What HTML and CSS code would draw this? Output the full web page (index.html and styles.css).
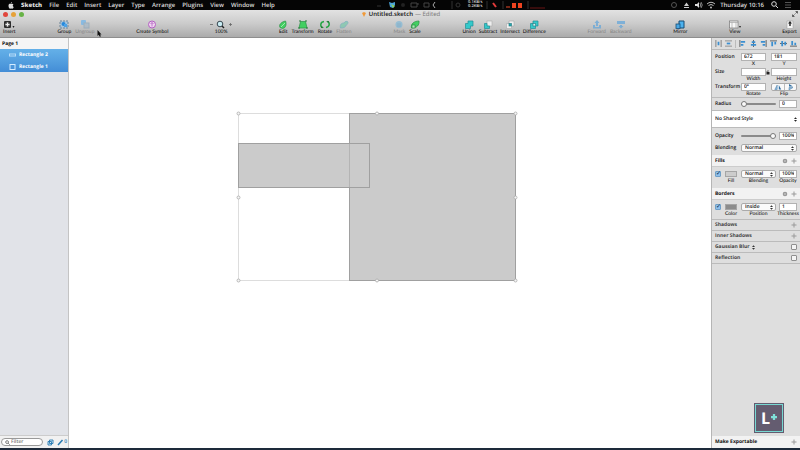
FILE: index.html
```html
<!DOCTYPE html>
<html lang="en">
<head>
<meta charset="utf-8">
<title>Untitled.sketch</title>
<link rel="stylesheet" href="styles.css">
</head>
<body>
<nav class="menubar">
  <div class="menus">
    <svg class="apple" viewBox="0 0 12 14"><path d="M8 0C6 .5 5.500 2 5.700 3 7 3 8 1.500 8 0zM6 4C4 3 1 3.500 1 7.500 1 11 3 14 4.500 13.500 6 13 6.500 13 8 13.500 9.500 14 11 11.500 11.500 10 9 9 9 6 11 5 9.500 3 7.500 3.500 6 4z" fill="#ddd"/></svg>
    <b>Sketch</b><span>File</span><span>Edit</span><span>Insert</span><span>Layer</span><span>Type</span><span>Arrange</span><span>Plugins</span><span>View</span><span>Window</span><span>Help</span>
  </div>
  <div class="monitors">
    <svg class="mon-left" viewBox="0 0 60 10"><path d="M1 6h4" stroke="#333"/><path d="M13 2l3 1 3-1v3l-2 3-3-1z" fill="#4ba3d8"/><path d="M15 4l4 2-2 2z" fill="#8fd05a"/><circle cx="27" cy="5" r="2" fill="#222"/><path d="M35 3h6v4h-6zM41 4h2M48 3h5v4h-5z" fill="none" stroke="#444"/><path d="M59 2l-2 3 2 3" fill="none" stroke="#aaa"/></svg>
    <svg class="mon-dial" viewBox="0 0 12 10"><path d="M2 1v8" stroke="#333"/><circle cx="8" cy="5" r="2" fill="none" stroke="#333"/></svg>
    <span class="net">0.1KB/s<br>0.2KB/s</span>
    <svg class="mon-cpu" viewBox="0 0 66 10"><path d="M3 1v8M19 1v8M44 1v8" stroke="#333"/><path d="M9 3l3 4" stroke="#e23a3a" stroke-width="2"/><path d="M22 7h4" stroke="#e84a2a"/><path d="M28 3h4v5h-4zM34 3h4v5h-4z" fill="#ee4420"/><path d="M46 8h15" stroke="#6a1515"/></svg>
  </div>
  <div class="status">
    <svg class="status-icons" viewBox="0 0 46 10"><circle cx="4" cy="5" r="2.500" fill="none" stroke="#555"/><path d="M14 6l2.500-3.500L19 6zM14 7h5v1h-5z" fill="#ccc"/><path d="M25 4h2l2-2v6l-2-2h-2z" fill="#ddd"/><path d="M30 3q1.500 2 0 4M31 2q2.500 3 0 6" fill="none" stroke="#bbb" stroke-width=".7"/><path d="M37 4q4-3.500 8 0M38.500 5.500q2.500-2 5 0" fill="none" stroke="#bbb"/><circle cx="41" cy="7.500" r="1" fill="#bbb"/></svg>
    <span>Thursday 10:16</span>
    <svg class="status-search" viewBox="0 0 22 10"><circle cx="4" cy="4" r="2.300" fill="none" stroke="#ddd"/><path d="M6 6l2 2" stroke="#ddd"/><path d="M15 2.500h6M15 5h6M15 7.500h6" stroke="#555"/></svg>
  </div>
</nav>

<header class="window-head">
  <div class="titlebar">
    <div class="lights"><button class="light red" aria-label="Close"></button><button class="light amber" aria-label="Minimize"></button><button class="light green" aria-label="Zoom"></button></div>
    <div class="title"><svg class="doc" viewBox="0 0 6 6"><path d="M1 2l2-1 2 1-2 4z" fill="#f09a3a"/></svg><span>Untitled.sketch</span><span class="edited">— Edited</span></div>
    <svg class="full" viewBox="0 0 6 6"><path d="M3.500.5h2v2M5.500.5L3.500 2.500M.5 3.500v2h2M.5 5.500l2-2" fill="none" stroke="#555" stroke-width=".9"/></svg>
  </div>
  <div class="toolbar">
    <div class="group"><button class="tool"><svg viewBox="0 0 12 9"><rect x="1" y="1" width="7" height="7" rx="1" fill="#2c2c2c"/><path d="M3 3h3v3H3z" fill="none" stroke="#bbb" stroke-width=".6"/><path d="M4.500 2.500v4M2.500 4.500h4" stroke="#eee"/><path d="M9.500 6h2l-1 2z" fill="#222"/></svg>Insert</button></div>
    <div class="group">
      <button class="tool"><svg viewBox="0 0 12 9"><rect x="2" y="1" width="8" height="7" fill="#a9c5dc" stroke="#6d8497" stroke-dasharray="2 1"/><circle cx="5.500" cy="4" r="2" fill="#2589dc"/><rect x="6" y="4" width="3" height="3" fill="#4aa2e8"/></svg>Group</button>
      <button class="tool off"><svg viewBox="0 0 12 9"><rect x="2" y="0" width="5" height="5" rx="1" fill="#6cb3eb"/><rect x="5" y="3" width="5" height="5" fill="#a5b8c8" stroke="#8ca5b8"/></svg>Ungroup</button>
    </div>
    <div class="group"><button class="tool"><svg viewBox="0 0 12 9"><circle cx="6" cy="4.500" r="3.500" fill="#efd5f0" stroke="#b35fc2"/><path d="M6 2.500v4M4.500 4L6 2.500 7.500 4" stroke="#b35fc2" fill="none" stroke-width=".8"/></svg>Create Symbol</button></div>
    <div class="group zoom"><button class="tool"><svg class="wide" viewBox="0 0 22 9"><path d="M0 4.500h3M19 4.500h3M20.500 3v3" stroke="#666" stroke-width=".8"/><circle cx="10" cy="4" r="2.800" fill="#c9edf4" stroke="#38464f"/><path d="M12 6l2 2" stroke="#222" stroke-width="1.500"/></svg>100%</button></div>
    <div class="group">
      <button class="tool"><svg viewBox="0 0 12 9"><path d="M3 7.500C1.500 5 4 2 8.500 1c1 2 1 7-3 7.500z" fill="#43cf62" stroke="#2b9246" stroke-width=".7"/><path d="M4 7l4-4" stroke="#d8ffe0" stroke-width=".6"/></svg>Edit</button>
      <button class="tool"><svg viewBox="0 0 12 9"><path d="M3.500 1.500h5l1.500 6.500H2z" fill="#43cf62" stroke="#2b9246" stroke-width=".7"/><path d="M2 1h2M8 1h2M1 8h2M9 8h2" stroke="#277c3b"/></svg>Transform</button>
      <button class="tool"><svg viewBox="0 0 12 9"><path d="M5 1.500C1 2 1 6.500 3.500 7.500M7 7.500c4-.5 4-5 1.500-6" fill="none" stroke="#26a745" stroke-width="1.500"/><path d="M2 6l3 2H2zM10 3L7 1h3z" fill="#277c3b"/></svg>Rotate</button>
      <button class="tool off"><svg viewBox="0 0 12 9"><path d="M2.500 8C1.500 4 4 3 6 3c1-2 3-2 4-1 0 2-1 3-2 3 0 2-2 3-5.500 3z" fill="#77c9a9" stroke="#68a8bd" stroke-width=".8"/></svg>Flatten</button>
    </div>
    <div class="group">
      <button class="tool off"><svg viewBox="0 0 12 9"><circle cx="6" cy="4.500" r="3.500" fill="#80b9d8"/><rect x="4" y="3" width="4" height="4" fill="#78afcf"/></svg>Mask</button>
      <button class="tool"><svg viewBox="0 0 12 9"><path d="M2.500 8C1.500 4 5 1 10 1c.5 4-2 7-7.500 7z" fill="#43cf62" stroke="#2b9246" stroke-width=".7"/><rect x="3" y="5" width="3" height="3" fill="#a7efb6" stroke="#277c3b" stroke-width=".6"/></svg>Scale</button>
    </div>
    <div class="group tight">
      <button class="tool"><svg viewBox="0 0 12 9"><path d="M5 1h5v5H7.500v2.500h-5v-5H5z" fill="#35c9ca" stroke="#218e97" stroke-width=".7"/></svg>Union</button>
      <button class="tool"><svg viewBox="0 0 12 9"><rect x="5" y="1" width="5" height="5" fill="#eee" stroke="#aaa" stroke-width=".6"/><path d="M2.500 3.500H5V6h2.500v2.500h-5z" fill="#35c9ca" stroke="#218e97" stroke-width=".7"/></svg>Subtract</button>
      <button class="tool"><svg viewBox="0 0 12 9"><path d="M5 1h5v5H7.500v2.500h-5v-5H5z" fill="#eee" stroke="#aaa" stroke-width=".6"/><rect x="5" y="3.500" width="2.500" height="2.500" fill="#27a8ac" stroke="#217780" stroke-width=".6"/></svg>Intersect</button>
      <button class="tool"><svg viewBox="0 0 12 9"><path d="M5 1h5v5H7.500v2.500h-5v-5H5z" fill="#35c9ca" stroke="#218e97" stroke-width=".7"/><rect x="5" y="3.500" width="2.500" height="2.500" fill="#d9eeee" stroke="#217780" stroke-width=".6"/></svg>Difference</button>
    </div>
    <div class="group">
      <button class="tool off"><svg viewBox="0 0 12 9"><path d="M6 0L3.500 3H5v3h2V3h1.500zM2 5h2v2h4V5h2v3.500H2z" fill="#5fa5dc"/></svg>Forward</button>
      <button class="tool off"><svg viewBox="0 0 12 9"><path d="M2 1h8v3H2zM5 5h2v1h1.500L6 8.500 3.500 6H5z" fill="#5fa5dc"/></svg>Backward</button>
    </div>
    <div class="group"><button class="tool"><svg viewBox="0 0 12 9"><path d="M5 1h5v7H5z" fill="#4cb2ef" stroke="#174d75"/><rect x="2" y="4" width="4" height="4.500" fill="#49a8e4" stroke="#174d75" stroke-width=".8"/></svg>Mirror</button></div>
    <div class="group"><button class="tool"><svg viewBox="0 0 12 9"><rect x=".5" y="1" width="8.500" height="7" fill="#f8f8f8" stroke="#777" stroke-width=".7"/><path d="M.5 2.500H9M3 2.500V8M7 2.500V8" stroke="#999" stroke-width=".6"/><path d="M10 6h2l-1 2z" fill="#222"/></svg>View</button></div>
    <div class="group"><button class="tool"><svg viewBox="0 0 12 9"><rect x="3" y="1" width="6" height="7.500" fill="#f5f5f5" stroke="#999" stroke-width=".5"/><path d="M6 1L4 3.500h1.300V6h1.400V3.500H8z" fill="#222"/></svg>Export</button></div>
  </div>
  <svg class="cursor" viewBox="0 0 5 7"><path d="M.5 0L4.500 4.500H3l1 2H2.500l-.8-1.700L.5 6z" fill="#111"/></svg>
</header>

<main class="work">
  <aside class="layers">
    <div class="page">Page 1</div>
    <button class="layer"><svg viewBox="0 0 8 8"><rect x="1" y="3" width="6" height="2" fill="none" stroke="#b7dcf8"/></svg>Rectangle 2</button>
    <button class="layer"><svg viewBox="0 0 8 8"><rect x="1.500" y="1.500" width="5" height="5" fill="none" stroke="#d4ecff"/></svg>Rectangle 1</button>
    <div class="filter">
      <label class="search"><svg viewBox="0 0 6 6"><circle cx="2.500" cy="2.500" r="1.700" fill="none" stroke="#444" stroke-width=".8"/><path d="M4 4l1.500 1.500" stroke="#444"/></svg><input type="search" placeholder="Filter" aria-label="Filter"></label>
      <svg class="filter-icon" viewBox="0 0 7 7"><path d="M2.500 1h3.500v3.500H2.500zM1 2.500h3.500V6H1z" fill="#d6e9f6" stroke="#287ab2" stroke-width=".9"/></svg>
      <svg class="filter-icon" viewBox="0 0 7 7"><path d="M1 6L5.500 1" stroke="#287ab2" stroke-width="1.500"/></svg><span>0</span>
    </div>
  </aside>

  <section class="canvas">
    <svg class="art" viewBox="0 0 284 174">
      <path d="M114 3.500H3.500v167H114" fill="none" stroke="#ddd"/>
      <rect x="114.500" y="3.500" width="166" height="167" fill="#cbcbcb" stroke="#a0a0a0"/>
      <rect x="3.500" y="33.500" width="131" height="44" fill="#cbcbcb" stroke="#a0a0a0"/>
      <path d="M114.500 34v43" stroke="#b4b4b4"/>
      <g fill="#f6f6f6" stroke="#aaa" stroke-width=".8"><circle cx="3.500" cy="3.500" r="1.500"/><circle cx="142" cy="3.500" r="1.500"/><circle cx="280.500" cy="3.500" r="1.500"/><circle cx="3.500" cy="87.500" r="1.500"/><circle cx="280.500" cy="87.500" r="1.500"/><circle cx="3.500" cy="170.500" r="1.500"/><circle cx="142" cy="170.500" r="1.500"/><circle cx="280.500" cy="170.500" r="1.500"/></g>
    </svg>
  </section>

  <aside class="inspector">
    <div class="align">
      <svg viewBox="0 0 8 8"><path d="M1 0v8M7 0v8" stroke="#777"/><path d="M4 2v4" stroke="#3b8fd0" stroke-width="2"/></svg>
      <svg viewBox="0 0 8 8"><path d="M0 1h8M0 7h8" stroke="#888"/><path d="M2 4h4" stroke="#3b8fd0" stroke-width="2"/></svg>
      <i></i>
      <svg viewBox="0 0 8 8"><path d="M1 0v8" stroke="#555"/><path d="M2 2h5M2 5.500h3" stroke="#3b8fd0" stroke-width="2"/></svg>
      <svg viewBox="0 0 8 8"><path d="M4 0v8" stroke="#555"/><path d="M2 2.500h4M1 5.500h6" stroke="#3b8fd0" stroke-width="2"/></svg>
      <svg viewBox="0 0 8 8"><path d="M7 0v8" stroke="#555"/><path d="M1 2h5M3 5.500h3" stroke="#3b8fd0" stroke-width="2"/></svg>
      <svg viewBox="0 0 8 8"><path d="M0 1h8" stroke="#555"/><path d="M2.500 2v5M6 2v3" stroke="#3b8fd0" stroke-width="2"/></svg>
      <svg viewBox="0 0 8 8"><path d="M0 4h8" stroke="#555"/><path d="M2.500 1v6M6 2v4" stroke="#3b8fd0" stroke-width="2"/></svg>
      <svg viewBox="0 0 8 8"><path d="M0 7h8" stroke="#555"/><path d="M2.500 1v5M6 3v3" stroke="#3b8fd0" stroke-width="2"/></svg>
    </div>
    <div class="geometry">
      <span class="name">Position</span>
      <div class="cell"><input id="x" value="672"><label for="x">X</label></div>
      <div class="cell"><input id="y" value="181"><label for="y">Y</label></div>
      <span class="name">Size</span>
      <div class="cell"><input id="w"><label for="w">Width</label></div>
      <div class="cell"><svg class="lock" viewBox="0 0 4 5"><path d="M.5 2h3v2.500h-3z" fill="#222"/><path d="M1 2V1h2" fill="none" stroke="#333" stroke-width=".6"/></svg><input id="h"><label for="h">Height</label></div>
      <span class="name">Transform</span>
      <div class="cell"><input id="r" value="0°"><label for="r">Rotate</label></div>
      <div class="cell"><div class="flip"><button aria-label="Flip horizontal"><svg viewBox="0 0 8 6"><path d="M3.200 1v4.500H.8z" fill="#8db9dd" stroke="#467da8" stroke-width=".5"/><path d="M4.800 1v4.500h2.400z" fill="#2e6da0"/></svg></button><button aria-label="Flip vertical"><svg viewBox="0 0 8 6"><path d="M2 0l4 2.500H2z" fill="#2e6da0"/><path d="M2 3.500h4L2 6z" fill="#8db9dd" stroke="#467da8" stroke-width=".5"/></svg></button></div><small>Flip</small></div>
    </div>
    <div class="slide-row ruled"><label for="radius" class="name">Radius</label><input id="radius" type="range" value="0"><input class="num" value="0" aria-label="Radius value"></div>
    <div class="shared"><select aria-label="Shared style"><option>No Shared Style</option></select><svg class="updown" viewBox="0 0 4 6"><path d="M0 2.300L2 0l2 2.300zM0 3.700L2 6l2-2.300z" fill="#222"/></svg></div>
    <div class="appearance">
      <div class="slide-row"><label for="opacity" class="name">Opacity</label><input id="opacity" type="range" value="100"><input class="num" value="100%" aria-label="Opacity value"></div>
      <div class="blend-row"><label for="blend" class="name">Blending</label><div class="pick"><select id="blend"><option>Normal</option></select><svg class="updown" viewBox="0 0 4 6"><path d="M0 2.300L2 0l2 2.300zM0 3.700L2 6l2-2.300z" fill="#333"/></svg></div></div>
    </div>
    <h2>Fills<svg class="gear" viewBox="0 0 6 6"><circle cx="3" cy="3" r="1.700" fill="#bbb" stroke="#999" stroke-width="1.200"/></svg><svg class="plus" viewBox="0 0 6 6"><path d="M3 .5v5M.5 3h5" stroke="#999"/></svg></h2>
    <div class="paint">
      <input type="checkbox" checked aria-label="Fill enabled">
      <div class="cell"><button id="fc" class="swatch"></button><label for="fc">Fill</label></div>
      <div class="cell"><div class="pick"><select id="fb"><option>Normal</option></select><svg class="updown" viewBox="0 0 4 6"><path d="M0 2.300L2 0l2 2.300zM0 3.700L2 6l2-2.300z" fill="#333"/></svg></div><label for="fb">Blending</label></div>
      <div class="cell"><input id="fo" value="100%"><label for="fo">Opacity</label></div>
    </div>
    <h2>Borders<svg class="gear" viewBox="0 0 6 6"><circle cx="3" cy="3" r="1.700" fill="#bbb" stroke="#999" stroke-width="1.200"/></svg><svg class="plus" viewBox="0 0 6 6"><path d="M3 .5v5M.5 3h5" stroke="#999"/></svg></h2>
    <div class="paint">
      <input type="checkbox" checked aria-label="Border enabled">
      <div class="cell"><button id="bc" class="swatch dark"></button><label for="bc">Color</label></div>
      <div class="cell"><div class="pick"><select id="bp"><option>Inside</option></select><svg class="updown" viewBox="0 0 4 6"><path d="M0 2.300L2 0l2 2.300zM0 3.700L2 6l2-2.300z" fill="#333"/></svg></div><label for="bp">Position</label></div>
      <div class="cell"><input id="bt" value="1"><label for="bt">Thickness</label></div>
    </div>
    <div class="effect"><span>Shadows</span><svg class="plus" viewBox="0 0 6 6"><path d="M3 .5v5M.5 3h5" stroke="#999"/></svg></div>
    <div class="effect"><span>Inner Shadows</span><svg class="plus" viewBox="0 0 6 6"><path d="M3 .5v5M.5 3h5" stroke="#999"/></svg></div>
    <div class="effect"><label for="blur">Gaussian Blur</label><svg class="updown" viewBox="0 0 4 6"><path d="M0 2.300L2 0l2 2.300zM0 3.700L2 6l2-2.300z" fill="#333"/></svg><input id="blur" type="checkbox"></div>
    <div class="effect last"><label for="refl">Reflection</label><input id="refl" type="checkbox"></div>
    <div class="badge"><div class="badge-frame">L<svg viewBox="0 0 8 8"><path d="M2.500 0h3v2.500H8v3H5.500V8h-3V5.500H0v-3h2.500z" fill="#7fe0d8"/></svg></div></div>
    <div class="exportable">Make Exportable<svg class="plus" viewBox="0 0 6 6"><path d="M3 .5v5M.5 3h5" stroke="#999"/></svg></div>
  </aside>
</main>
</body>
</html>
```
FILE: styles.css
```css
* { box-sizing: border-box; }
body {
  margin: 0;
  height: 100vh;
  display: flex;
  flex-direction: column;
  overflow: hidden;
  background: #1d2a3a;
  color: #111;
  font: 600 5px/8px "Open Sans", sans-serif;
  text-rendering: geometricPrecision;
}
svg { display: block; flex: none; }
button, input, select {
  font: inherit;
  color: inherit;
  text-rendering: inherit;
  margin: 0;
  padding: 0;
  border: 0;
  background: none;
  appearance: none;
  min-width: 0;
}

/* menu bar */
.menubar {
  height: 10px;
  flex: none;
  display: grid;
  grid-template-columns: 47% 1fr auto;
  align-items: center;
  background: #050505;
  color: #ddd;
  font-size: 6px;
}
.menus { display: flex; align-items: center; gap: 7px; padding-left: 8px; }
.apple { width: 6px; height: 7px; }
.monitors { display: flex; align-items: center; gap: 2px; }
.mon-left { width: 60px; height: 10px; }
.mon-dial { width: 12px; height: 10px; margin-left: 12px; }
.mon-cpu { width: 66px; height: 10px; }
.net { font-size: 4px; line-height: 4px; margin-left: 4px; }
.status { display: flex; align-items: center; gap: 4px; padding-right: 8px; }
.status-icons { width: 46px; height: 10px; }
.status-search { width: 22px; height: 10px; margin-left: 2px; }

/* title and toolbar */
.window-head {
  position: relative;
  flex: none;
  background: linear-gradient(#e2e2e2, #cbcbcb 50%, #ababab);
  border-bottom: 1px solid #8e8e8e;
}
.titlebar { display: grid; grid-template-columns: 1fr auto 1fr; align-items: center; height: 8px; padding: 0 2px 0 3px; }
.lights { display: flex; gap: 3px; }
.light { width: 5px; height: 5px; border-radius: 50%; }
.red { background: #e1473d; }
.amber { background: #e6a23a; }
.green { background: #68b347; }
.title { display: flex; align-items: center; gap: 2px; font-size: 6px; }
.doc { width: 6px; height: 6px; }
.edited { color: #777; font-weight: 400; }
.full { width: 6px; height: 6px; justify-self: end; }
.toolbar { display: flex; justify-content: space-between; padding: 2px 3px; }
.group { display: flex; gap: 4px; }
.tight { gap: 3px; }
.zoom { padding: 0 7px 0 2px; }
.tool { display: flex; flex-direction: column; align-items: center; font: 500 5px/7px Lato, sans-serif; height: 15px; white-space: nowrap; }
.tool svg { width: 12px; height: 9px; margin: 0 -2px; }
.tool .wide { width: 22px; }
.off { color: #888; }
.off svg { opacity: .7; }
.cursor { position: absolute; left: 97px; top: 20px; width: 5px; height: 7px; }

/* layer list */
.work { flex: 1; min-height: 0; display: grid; grid-template-columns: 69px 1fr 89px; margin-bottom: 2px; background: #fff; }
.layers { display: flex; flex-direction: column; background: #e1e3e8; border-right: 1px solid #c4c4c4; }
.page { height: 11px; padding: 2px; background: #f5f5f5; font-weight: 700; }
.layer { display: flex; align-items: center; gap: 2px; height: 11px; padding-left: 8px; background: linear-gradient(#549fdf, #438dd6); color: #fff; font-weight: 700; }
.page + .layer { background: linear-gradient(#64b0e8, #549fdf); height: 12px; }
.layer svg { width: 9px; height: 8px; }
.filter { margin-top: auto; height: 13px; display: flex; align-items: center; gap: 3px; padding: 0 1px; background: #f1f1f1; border-top: 1px solid #ccc; color: #287ab2; }
.search { display: flex; align-items: center; gap: 1px; width: 43px; height: 8px; padding-left: 3px; margin-right: 1px; border: 1px solid #999; border-radius: 4px; background: #fff; }
.search svg { width: 5px; height: 5px; }
.search input { width: 30px; height: 6px; line-height: 6px; }
.search input::placeholder { color: #777; }
.filter-icon { width: 7px; height: 7px; }
.filter span { margin-left: -3px; }

/* canvas */
.canvas { position: relative; overflow: hidden; }
.art { position: absolute; left: 166px; top: 72px; width: 284px; height: 174px; }

/* inspector */
.inspector { display: flex; flex-direction: column; background: #dedede; border-left: 1px solid #b5b5b5; }
.align { display: flex; justify-content: space-between; align-items: center; height: 12px; padding: 0 3px; border-bottom: 1px solid #bbb; }
.align svg { width: 7px; height: 7px; }
.align i { width: 1px; height: 8px; background: #bbb; }
.name { padding-left: 3px; white-space: nowrap; }
.geometry { display: grid; grid-template-columns: 24px 25px 26px; column-gap: 5px; padding-top: 3px; }
.cell { display: flex; flex-direction: column; align-items: center; position: relative; }
.cell label, .cell small { font: 500 5px/6px Lato, sans-serif; white-space: nowrap; }
.cell input, .num { width: 100%; height: 8px; padding: 0 2px; background: #fff; border: 1px solid #b2b2b2; line-height: 6px; }
.geometry .cell { height: 15px; }
.geometry .cell:nth-last-child(-n+2) { height: 14px; }
.lock { position: absolute; left: -5px; top: 2px; width: 4px; height: 5px; }
.flip { display: grid; grid-template-columns: 1fr 1fr; width: 100%; height: 8px; border: 1px solid #aaa; border-radius: 2px; background: #f8f8f8; }
.flip button { display: grid; place-items: center; }
.flip button + button { border-left: 1px solid #bbb; }
.flip svg { width: 8px; height: 6px; }
.slide-row { display: grid; grid-template-columns: 26px 35px 18px; column-gap: 3px; align-items: center; height: 12px; }
.ruled { height: 14px; border-top: 1px solid #bbb; border-bottom: 1px solid #bbb; }
input[type="range"] { height: 7px; width: 100%; }
input[type="range"]::-webkit-slider-runnable-track { height: 2px; border-radius: 1px; background: #8a8a8a; }
input[type="range"]::-webkit-slider-thumb { appearance: none; width: 6px; height: 6px; margin-top: -2px; border: 1px solid #777; border-radius: 50%; background: #fafafa; }
.shared { display: flex; align-items: center; height: 17px; padding: 0 3px; background: #fff; border-bottom: 1px solid #bbb; }
.shared select { flex: 1; }
.updown { width: 3px; height: 5px; }
.appearance { padding-top: 2px; }
.blend-row { display: grid; grid-template-columns: 29px 1fr; align-items: center; padding-right: 3px; height: 11px; }
.pick { position: relative; width: 100%; height: 8px; border: 1px solid #aaa; border-radius: 2px; background: #fafafa; }
.pick select { display: block; width: 100%; height: 6px; line-height: 6px; padding-left: 3px; }
.pick .updown { position: absolute; right: 2px; top: 1px; pointer-events: none; }
h2 { display: flex; align-items: center; gap: 3px; height: 12px; margin: 2px 0 0; padding: 0 3px; border-bottom: 1px solid #ccc; background: #f2f2f2; font-size: 5px; font-weight: 700; }
.gear { width: 6px; height: 6px; margin-left: auto; }
.plus { width: 6px; height: 6px; }
.paint { display: grid; grid-template-columns: 6px 14px 35px 18px; column-gap: 3px; padding: 3px 0 2px 3px; }
.swatch { width: 12px; height: 6px; margin: 1px 0; border: 1px solid #a5a5a5; background: #ccc; }
.dark { background: #8c8c8c; }
input[type="checkbox"] { width: 6px; height: 6px; border: 1px solid #8f8f8f; border-radius: 1px; background: #f4f4f4; }
.paint > input { margin-top: 1px; }
input[type="checkbox"]:checked { background: #8fc0ea; border-color: #6f9fc8; }
input[type="checkbox"]:checked::after { content: "✓"; display: block; color: #08213d; font: bold 6px/4px "DejaVu Sans", sans-serif; }
.effect { display: flex; align-items: center; gap: 3px; height: 11px; padding: 0 3px; border-top: 1px solid #bbb; color: #444; font-weight: 700; }
.last { height: 12px; border-bottom: 1px solid #bbb; }
.effect .plus, .effect input { margin-left: auto; }
.badge { margin: auto 16px 3px auto; padding: 1px; width: 30px; height: 30px; background: #645c70; }
.badge-frame { display: flex; align-items: center; justify-content: center; gap: 1px; height: 28px; border: 1px solid #77d8d2; color: #fff; font: bold 16px/20px "Open Sans", sans-serif; }
.badge svg { width: 6px; height: 6px; margin-bottom: 3px; }
.exportable { display: flex; align-items: center; justify-content: space-between; height: 12px; padding: 0 3px; background: #f2f2f2; font-weight: 700; }
```
